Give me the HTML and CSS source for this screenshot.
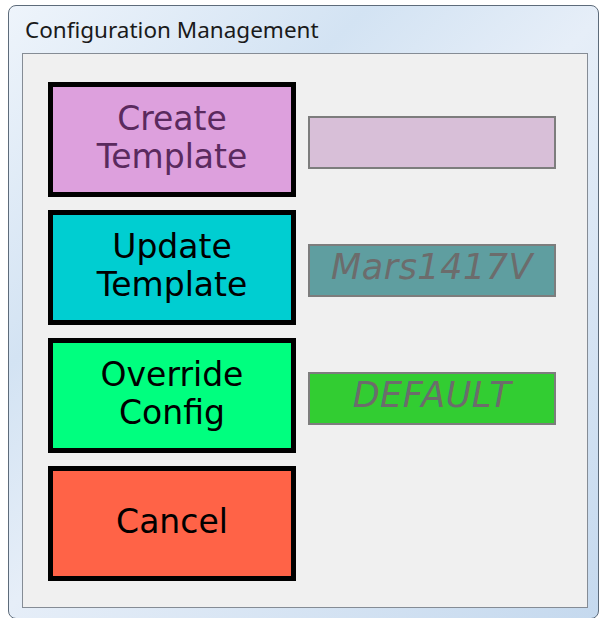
FILE: index.html
```html
<!DOCTYPE html>
<html lang="en">
<head>
  <meta charset="UTF-8" />
  <title>Configuration Management</title>
  <link rel="stylesheet" href="styles.css">
</head>
<body>

  <div class="window">
    <div class="title-bar">Configuration Management</div>
    <div class="client">
      <div class="rows">
        <button class="big-btn create">Create<br>Template</button>
        <div class="field thistle"></div>

        <button class="big-btn update">Update<br>Template</button>
        <div class="field cadet">Mars1417V</div>

        <button class="big-btn override">Override<br>Config</button>
        <div class="field lime">DEFAULT</div>

        <button class="big-btn cancel">Cancel</button>
      </div>
    </div>
  </div>

</body>
</html>
```

FILE: styles.css
```css
body {
  margin: 0;
  background-color: #ffffff;
  font-family: "DejaVu Sans", Verdana, sans-serif;
}

.window {
  box-sizing: border-box;
  width: 591px;
  height: 614px;
  margin: 5px 0 0 8px;
  border: 1px solid #5d6b7a;
  border-radius: 8px;
  background: linear-gradient(135deg, #eef4fb 0%, #d3e3f3 30%, #e6eef8 50%, #c5d9ee 100%);
  display: flex;
  flex-direction: column;
}

.title-bar {
  height: 47px;
  padding-left: 16px;
  line-height: 47px;
  font-family: "Noto Sans", "Open Sans", sans-serif;
  font-size: 22.5px;
  color: #1a1a1a;
}

.client {
  flex: 1;
  margin: 0 10px 10px 13px;
  border: 1px solid #858c95;
  background-color: #f0f0f0;
  padding: 28px 0 0 25px;
}

.rows {
  display: grid;
  grid-template-columns: 248px 248px;
  grid-auto-rows: 115px;
  column-gap: 12px;
  row-gap: 13px;
}

.big-btn {
  box-sizing: border-box;
  border: 5px solid #000;
  font-family: "DejaVu Sans", Verdana, sans-serif;
  font-size: 33px;
  line-height: 38px;
  color: #000;
  padding: 0 0 4px;
  cursor: pointer;
}

.create { background-color: #dda0dd; color: #5a2a5e; }
.update { background-color: #00ced1; }
.override { background-color: #00ff7f; }
.cancel { background-color: #ff6347; }

.field {
  box-sizing: border-box;
  align-self: center;
  margin-top: 6px;
  height: 53px;
  border: 2px solid #7d7d7d;
  font-family: "DejaVu Sans", Verdana, sans-serif;
  font-style: italic;
  font-size: 35px;
  letter-spacing: 0.5px;
  line-height: 42px;
  text-align: center;
  color: #6c6c6c;
}

.thistle { background-color: #d8bfd8; }
.cadet { background-color: #5f9ea0; }
.lime { background-color: #32cd32; }
```
